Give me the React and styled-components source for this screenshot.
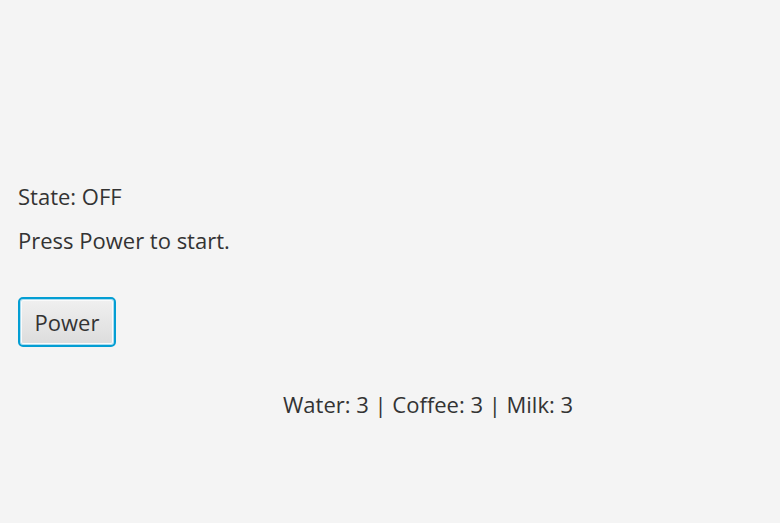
import React from 'react';
import styled, { createGlobalStyle } from 'styled-components';

const Global = createGlobalStyle`
    html, body {
        margin: 0;
        padding: 0;
        background: #f4f4f4;
    }
    body {
        font-family: "Open Sans", "Noto Sans", sans-serif;
        color: #333333;
    }
`

const Page = styled.div`
    width: 780px;
    height: 523px;
    box-sizing: border-box;
    padding: 181px 18px 0 18px;
    display: flex;
    flex-direction: column;
`

const Line = styled.div`
    font-size: 22px;
    line-height: 30px;
    height: 30px;
    margin-bottom: ${props => props.gap || 0}px;
`

const PowerButton = styled.button`
    align-self: flex-start;
    margin-top: 1px;
    font-family: inherit;
    font-size: 22px;
    color: #333333;
    width: 98px;
    height: 50px;
    padding: 0;
    border-radius: 5px;
    border: 2px solid #039ed3;
    box-shadow: inset 0 0 0 1px #a8dcf0, inset 0 0 0 2px #fafafa;
    background: linear-gradient(#f0f0f0, #dcdcdc);
    cursor: pointer;
`

const Status = styled.div`
    margin-top: 42px;
    padding-left: 265px;
    font-size: 22px;
    line-height: 30px;
`

const App = () => {
    return (
        <>
            <Global />
            <Page>
                <Line gap={14}>State: OFF</Line>
                <Line gap={41}>Press Power to start.</Line>
                <PowerButton>Power</PowerButton>
                <Status>Water: 3 | Coffee: 3 | Milk: 3</Status>
            </Page>
        </>
    );
};

export default App;
